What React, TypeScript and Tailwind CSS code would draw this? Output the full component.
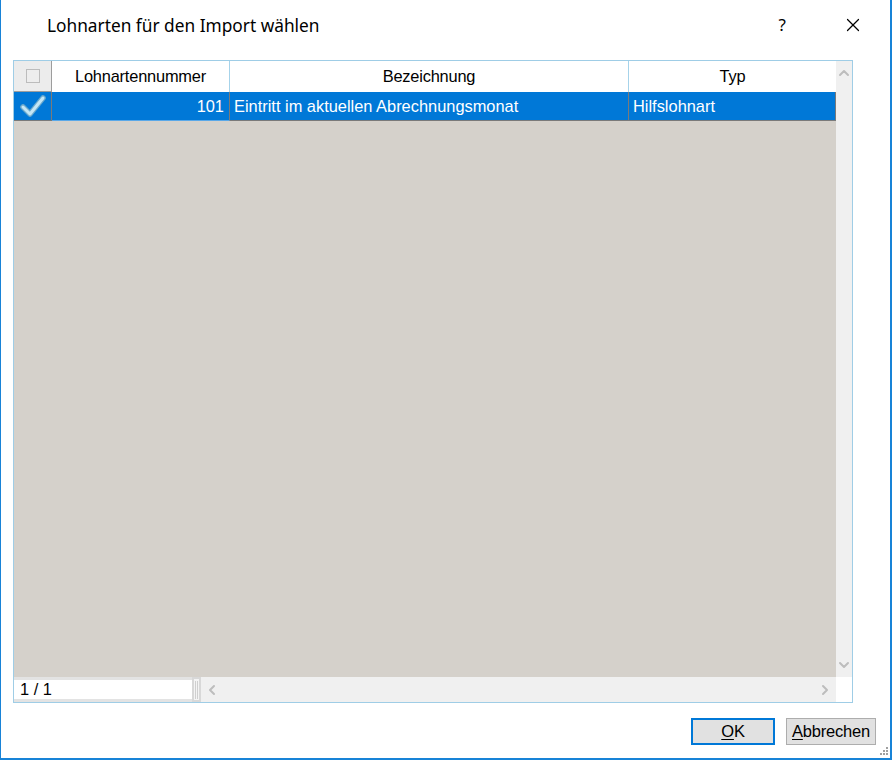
import { ChevronUp, ChevronDown, ChevronLeft, ChevronRight, X } from "lucide-react";

const rows = [{ nr: "101", name: "Eintritt im aktuellen Abrechnungsmonat", typ: "Hilfslohnart" }];

function Check() {
  return (
    <svg width="26" height="22" viewBox="0 0 26 22">
      <path d="M3 12 L10 19 L23 3" fill="none" stroke="#6aa9cc" strokeWidth="5.5" strokeLinejoin="round" strokeLinecap="round" />
      <path d="M3 12 L10 19 L23 3" fill="none" stroke="#c4e6f5" strokeWidth="3" strokeLinejoin="round" strokeLinecap="round" />
    </svg>
  );
}

function Grip() {
  return (
    <svg width="8" height="8" viewBox="0 0 8 8" className="absolute right-[2px] bottom-[3px]">
      {[[6, 0], [6, 3], [3, 3], [6, 6], [3, 6], [0, 6]].map(([x, y], i) => (
        <rect key={i} x={x} y={y} width="2" height="2" fill="#a0a0a0" />
      ))}
    </svg>
  );
}

export default function App() {
  return (
    <div
      className="relative w-[892px] h-[760px] bg-white border-l border-r-2 border-b-2 border-[#1883d7] flex flex-col text-[#000]"
      style={{ fontFamily: '"Liberation Sans", Arial, sans-serif' }}
    >
      <div className="h-[50px] flex items-center pl-[46px] pr-[26px]">
        <span className="text-[17.3px] text-[#000] pt-[1px]" style={{ fontFamily: '"Noto Sans", "Open Sans", sans-serif' }}>
          Lohnarten für den Import wählen
        </span>
        <span className="ml-auto text-[17px] mr-[56px]" style={{ fontFamily: '"Noto Sans", sans-serif' }}>?</span>
        <X size={22} strokeWidth={1.3} />
      </div>

      <div className="ml-[12px] mt-[10px] w-[840px] h-[643px] border border-[#9fcde6] flex flex-col">
        <div className="flex flex-1 min-h-0">
          <div className="flex-1 bg-[#d5d1cb] flex flex-col">
            <div className="flex h-[31px] bg-white text-[16.4px] tracking-[-0.2px]">
              <div className="w-[38px] border-r border-b border-[#9d9d9d] bg-[#ececec] flex items-center justify-center">
                <div className="w-[14px] h-[14px] border border-[#bcbcbc] bg-[#ededed]" />
              </div>
              <div className="w-[178px] border-r border-[#a6d3ea] flex items-center justify-center">Lohnartennummer</div>
              <div className="w-[399px] border-r border-[#a6d3ea] flex items-center justify-center">Bezeichnung</div>
              <div className="w-[207px] flex items-center justify-center">Typ</div>
            </div>
            {rows.map((r) => (
              <div key={r.nr} className="flex h-[29px] text-[16.4px] text-white">
                <div className="w-[38px] bg-[#0078d7] border-r border-b border-[#7a7a7a] flex items-center justify-center">
                  <Check />
                </div>
                <div className="w-[178px] bg-[#0078d7] border-r border-b border-[#5aa8e8] border-r-[#7a7a7a] flex items-center justify-end pr-[5px]">
                  {r.nr}
                </div>
                <div className="w-[399px] bg-[#0078d7] border-r border-b border-[#7a7a7a] flex items-center pl-[4px]">{r.name}</div>
                <div className="w-[207px] bg-[#0078d7] border-r border-b border-[#7a7a7a] flex items-center pl-[4px]">{r.typ}</div>
              </div>
            ))}
          </div>
          <div className="w-[16px] bg-[#f0f0f0] flex flex-col items-center justify-between py-[4px] text-[#bdbdbd]">
            <ChevronUp size={16} strokeWidth={3} />
            <ChevronDown size={16} strokeWidth={3} />
          </div>
        </div>
        <div className="flex h-[25px]">
          <div className="w-[178px] border-t-[3px] border-b-[3px] border-[#e3e3e3] bg-white flex items-center pl-[6px] text-[16.4px]">
            1 / 1
          </div>
          <div className="w-[9px] border-2 border-[#d8d8d8] bg-[#f4f4f4] flex flex-col items-center justify-center gap-[1px]">
            {Array.from({ length: 6 }).map((_, i) => (
              <div key={i} className="w-[3px] h-[2px] border-x border-dotted border-[#cfcfcf]" />
            ))}
          </div>
          <div className="flex-1 bg-[#f0f0f0] flex items-center justify-between px-[3px] text-[#bdbdbd]">
            <ChevronLeft size={16} strokeWidth={3} />
            <ChevronRight size={16} strokeWidth={3} />
          </div>
          <div className="w-[16px] bg-white" />
        </div>
      </div>

      <div className="flex justify-end gap-[11px] mt-[15px] mr-[14px] text-[16.5px] tracking-[-0.2px]">
        <button className="w-[84px] h-[27px] bg-[#e1e1e1] border-2 border-[#0078d7] flex items-center justify-center">
          <span><span className="underline underline-offset-2">O</span>K</span>
        </button>
        <button className="w-[90px] h-[27px] bg-[#e1e1e1] border border-[#adadad] flex items-center justify-center">
          <span><span className="underline underline-offset-2">A</span>bbrechen</span>
        </button>
      </div>
      <Grip />
    </div>
  );
}
